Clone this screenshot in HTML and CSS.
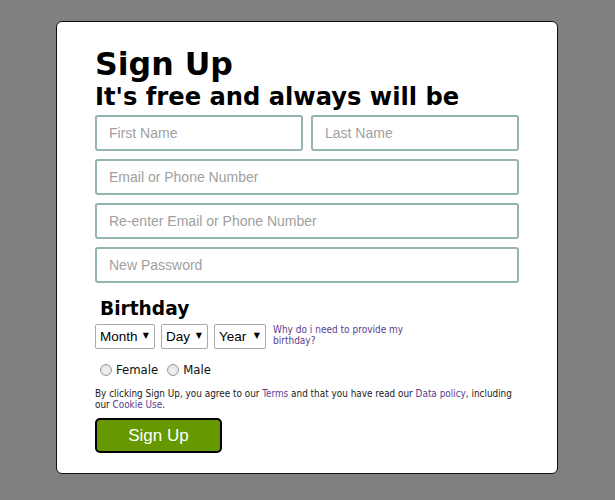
FILE: index.html
```html
<!DOCTYPE html>
<html lang="en">
<head>
<meta charset="utf-8">
<title>Sign Up</title>
<link rel="stylesheet" href="styles.css">
</head>
<body>
<div class="card">
  <h1 class="title">Sign Up</h1>
  <h2 class="subtitle">It's free and always will be</h2>
  <form class="form">
    <div class="row-split">
      <input class="field" type="text" placeholder="First Name">
      <input class="field" type="text" placeholder="Last Name">
    </div>
    <input class="field" type="text" placeholder="Email or Phone Number">
    <input class="field" type="text" placeholder="Re-enter Email or Phone Number">
    <input class="field" type="password" placeholder="New Password">
    <h3 class="birthday">Birthday</h3>
    <div class="dob">
      <span class="sel sel-month"><select><option>Month</option></select></span>
      <span class="sel sel-day"><select><option>Day</option></select></span>
      <span class="sel sel-year"><select><option>Year</option></select></span>
      <a class="why" href="#">Why do i need to provide my birthday?</a>
    </div>
    <div class="gender">
      <label class="radio"><input type="radio" name="g"><span>Female</span></label>
      <label class="radio"><input type="radio" name="g"><span>Male</span></label>
    </div>
    <p class="terms">By clicking Sign Up, you agree to our <a href="#">Terms</a> and that you have read our <a href="#">Data policy</a>, including our <a href="#">Cookie Use</a>.</p>
    <button class="submit" type="button">Sign Up</button>
  </form>
</div>
</body>
</html>
```
FILE: styles.css
```css
html, body {
  margin: 0;
  padding: 0;
  background: #808080;
}
body {
  font-family: "DejaVu Sans", Verdana, sans-serif;
  color: #000;
}
.card {
  box-sizing: border-box;
  width: 502px;
  margin: 21px 0 0 56px;
  background: #fff;
  border: 1px solid #111;
  border-radius: 6px;
  padding: 26px 38px 20px 38px;
}
.title {
  margin: 0;
  font-size: 31.6px;
  line-height: 32px;
  font-weight: bold;
}
.subtitle {
  margin: 3px 0 0;
  font-size: 24.2px;
  line-height: 28px;
  font-weight: bold;
}
.form {
  margin-top: 4px;
  display: flex;
  flex-direction: column;
  gap: 8px;
}
.row-split {
  display: flex;
  gap: 8px;
}
.row-split .field {
  flex: 1;
  min-width: 0;
}
.field {
  box-sizing: border-box;
  height: 36px;
  width: 100%;
  border: 2px solid #93b4b1;
  border-radius: 3px;
  padding: 0 12px;
  font-family: "Liberation Sans", Arial, sans-serif;
  font-size: 14px;
  color: #333;
  background: #fff;
  outline: none;
}
.field::placeholder {
  color: #a0a0a0;
}
.birthday {
  margin: 6px 0 0 5px;
  font-size: 18.6px;
  line-height: 23px;
  font-weight: bold;
}
.dob {
  margin-top: -4px;
  display: flex;
  align-items: flex-start;
  gap: 6px;
}
.sel {
  position: relative;
  display: block;
}
.sel select {
  appearance: none;
  -webkit-appearance: none;
  box-sizing: border-box;
  height: 25px;
  border: 1px solid #a9a9a9;
  border-radius: 2px;
  background: #fff;
  padding: 0 0 0 4px;
  font-family: "Liberation Sans", Arial, sans-serif;
  font-size: 13.5px;
  color: #000;
}
.sel::after {
  content: "\25BC";
  position: absolute;
  right: 6px;
  top: 7px;
  font-size: 8px;
  line-height: 10px;
  color: #000;
  pointer-events: none;
}
.sel-month select { width: 60px; }
.sel-day select { width: 47px; }
.sel-year select { width: 52px; }
.why {
  margin-left: 1px;
  width: 140px;
  font-family: "DejaVu Sans Condensed", "DejaVu Sans", sans-serif;
  font-size: 10px;
  line-height: 11px;
  color: #5c3d8f;
  text-decoration: none;
}
.gender {
  margin-top: 5px;
  display: flex;
  align-items: center;
  height: 16px;
  gap: 4px;
}
.radio {
  display: flex;
  align-items: center;
  font-family: "DejaVu Sans Condensed", "DejaVu Sans", sans-serif;
  font-size: 13px;
  line-height: 16px;
  color: #111;
}
.radio input {
  appearance: none;
  -webkit-appearance: none;
  box-sizing: border-box;
  margin: 0 4px 0 5px;
  width: 12px;
  height: 12px;
  border: 1px solid #9a9a9a;
  border-radius: 50%;
  background: radial-gradient(circle at 50% 60%, #f4f4f4 0%, #dcdcdc 100%);
}
.terms {
  margin: 2px 0 0;
  font-family: "DejaVu Sans Condensed", "DejaVu Sans", sans-serif;
  font-size: 9.9px;
  line-height: 11px;
  color: #1a1a1a;
}
.terms a {
  color: #5c3d8f;
  text-decoration: none;
}
.submit {
  align-self: flex-start;
  box-sizing: border-box;
  width: 127px;
  height: 35px;
  margin-top: 0;
  background: #669900;
  border: 2px solid #000;
  border-radius: 5px;
  color: #fff;
  font-family: "Liberation Sans", Arial, sans-serif;
  font-size: 17px;
  padding: 0;
}
```
